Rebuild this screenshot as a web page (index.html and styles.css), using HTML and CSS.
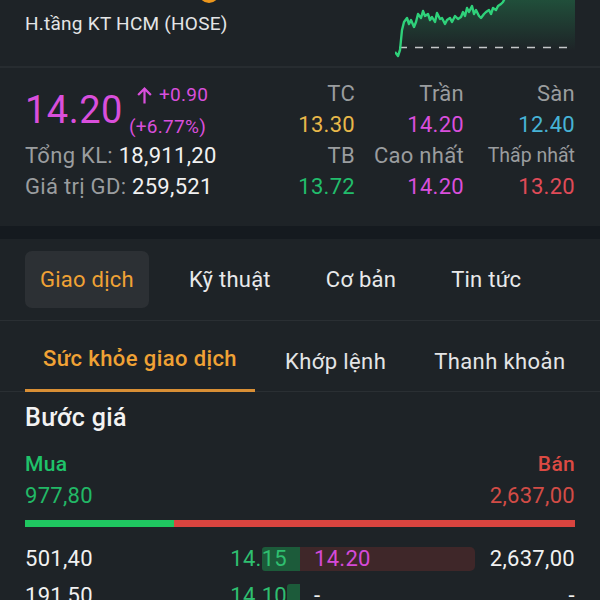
FILE: index.html
```html
<!DOCTYPE html>
<html lang="vi">
<head>
<meta charset="utf-8">
<title>CII</title>
<link rel="stylesheet" href="styles.css">
</head>
<body>
<div class="screen">
  <header class="head">
    <div class="ident">
      <span class="logo-dot"></span>
      <div class="name">H.tầng KT HCM (HOSE)</div>
    </div>
    <svg class="spark" width="180" height="60" viewBox="0 0 180 60">
      <defs>
        <linearGradient id="fill" x1="0" y1="0" x2="0" y2="1">
          <stop offset="0" stop-color="#27c46e" stop-opacity="0.28"/>
          <stop offset="0.85" stop-color="#27c46e" stop-opacity="0"/>
        </linearGradient>
      </defs>
      <polygon fill="url(#fill)" points="0,52 3,56 5,50 7,30 9,22 12,18 14,24 16,20 19,27 21,22 23,14 26,18 28,11 30,16 33,14 35,20 37,17 40,22 42,13 45,19 47,18 50,24 52,20 55,18 57,22 60,16 63,19 66,17 68,12 70,16 72,8 74,12 77,6 79,14 81,10 84,16 86,18 89,14 91,12 94,10 96,14 98,8 101,10 103,6 106,4 108,2 110,-2 180,-2 180,60 0,60"/>
      <line x1="4" y1="47.5" x2="180" y2="47.5" stroke="#c4c6c8" stroke-width="1.6" stroke-dasharray="8 8"/>
      <polyline fill="none" stroke="#2fd17a" stroke-width="2.4" stroke-linejoin="round" points="0,52 3,56 5,50 7,30 9,22 12,18 14,24 16,20 19,27 21,22 23,14 26,18 28,11 30,16 33,14 35,20 37,17 40,22 42,13 45,19 47,18 50,24 52,20 55,18 57,22 60,16 63,19 66,17 68,12 70,16 72,8 74,12 77,6 79,14 81,10 84,16 86,18 89,14 91,12 94,10 96,14 98,8 101,10 103,6 106,4 108,2 110,-2"/>
    </svg>
  </header>

  <section class="stats">
    <div class="price-block">
      <div class="price">14.20</div>
      <div class="change">
        <div class="chg-line">
          <svg class="arrow" width="17" height="17" viewBox="0 0 16 16"><path d="M8 15.5V1.8M2 7.6L8 1.6L14 7.6" fill="none" stroke="#d94fdc" stroke-width="2.1"/></svg>
          <span>+0.90</span>
        </div>
        <div class="chg-line">(+6.77%)</div>
      </div>
    </div>
    <div class="lbl">TC</div>
    <div class="lbl">Trần</div>
    <div class="lbl">Sàn</div>
    <div class="val ref">13.30</div>
    <div class="val ceil">14.20</div>
    <div class="val floor">12.40</div>
    <div class="meta"><span class="lbl-in">Tổng KL:</span> 18,911,20</div>
    <div class="lbl">TB</div>
    <div class="lbl">Cao nhất</div>
    <div class="lbl small">Thấp nhất</div>
    <div class="meta"><span class="lbl-in">Giá trị GD:</span> 259,521</div>
    <div class="val avg">13.72</div>
    <div class="val ceil">14.20</div>
    <div class="val low">13.20</div>
  </section>

  <div class="band"></div>

  <nav class="tabs">
    <div class="tab active">Giao dịch</div>
    <div class="tab">Kỹ thuật</div>
    <div class="tab">Cơ bản</div>
    <div class="tab">Tin tức</div>
  </nav>

  <nav class="subtabs">
    <div class="subtab active">Sức khỏe giao dịch</div>
    <div class="subtab">Khớp lệnh</div>
    <div class="subtab">Thanh khoản</div>
  </nav>

  <section class="book">
    <h2 class="book-title">Bước giá</h2>
    <div class="sides">
      <span class="buy-txt">Mua</span>
      <span class="sell-txt">Bán</span>
    </div>
    <div class="totals">
      <span class="buy-num">977,80</span>
      <span class="sell-num">2,637,00</span>
    </div>
    <div class="ratio"><span class="ratio-buy" style="width:27%"></span></div>

    <div class="levels">
      <div class="level">
        <div class="vol">501,40</div>
        <div class="bid"><span class="bid-bar" style="width:21.7%"></span><span class="px">14.15</span></div>
        <div class="ask"><span class="ask-bar" style="width:100%"></span><span class="px">14.20</span></div>
        <div class="vol right">2,637,00</div>
      </div>
      <div class="level">
        <div class="vol">191,50</div>
        <div class="bid"><span class="bid-bar" style="width:7.4%"></span><span class="px">14.10</span></div>
        <div class="ask"><span class="px plain">-</span></div>
        <div class="vol right">-</div>
      </div>
    </div>
  </section>
</div>
</body>
</html>
```

FILE: styles.css
```css
* { box-sizing: border-box; }
html, body { margin: 0; padding: 0; }
body {
  background: #1e2327;
  font-family: Roboto, "Noto Sans", "Liberation Sans", sans-serif;
  color: #eceded;
}
.screen {
  width: 600px;
  height: 600px;
  overflow: hidden;
  position: relative;
}

/* header */
.head {
  height: 68px;
  padding: 0 25px;
  display: flex;
  justify-content: space-between;
  align-items: flex-start;
  border-bottom: 2px solid #272c30;
}
.ident { position: relative; }
.logo-dot {
  position: absolute;
  left: 173px;
  top: -21px;
  width: 22px;
  height: 24px;
  border-radius: 50%;
  background: #ec961c;
}
.name {
  padding-top: 13px;
  font-size: 19px;
  line-height: 22px;
  letter-spacing: 0.25px;
  color: #e4e5e6;
}
.spark { display: block; }

/* stats */
.stats {
  padding: 10px 25px 24px;
  display: grid;
  grid-template-columns: 1fr 110px 109px 111px;
  grid-auto-rows: 31px;
  font-size: 22px;
  letter-spacing: 0.3px;
  align-items: center;
}
.price-block {
  grid-row: span 2;
  display: flex;
  align-items: center;
  gap: 6px;
  color: #d94fdc;
}
.price {
  font-size: 38px;
  line-height: 44px;
  letter-spacing: 0.5px;
  padding-top: 2px;
}
.change {
  display: flex;
  flex-direction: column;
  gap: 8px;
  font-size: 19px;
  line-height: 24px;
  letter-spacing: 0.3px;
  padding-top: 4px;
}
.chg-line { display: flex; align-items: center; }
.arrow { margin: 0 6px 0 7px; }
.lbl { text-align: right; color: #9a9d9f; white-space: nowrap; }
.lbl.small { font-size: 19.5px; letter-spacing: 0; }
.val { text-align: right; }
.ref { color: #e8b84a; }
.ceil { color: #d94fdc; }
.floor { color: #47b3d6; }
.avg { color: #22bd6c; }
.low { color: #e04b58; }
.meta { color: #f1f1f1; white-space: nowrap; }
.lbl-in { color: #9a9d9f; }

.band { height: 13px; background: #151a1f; }

/* tabs */
.tabs {
  padding: 12px 25px 12px;
  display: flex;
  gap: 25px;
  border-bottom: 1px solid #2a2f33;
}
.tab {
  height: 57px;
  padding: 0 15px;
  display: flex;
  align-items: center;
  font-size: 22px;
  letter-spacing: 0.25px;
  white-space: nowrap;
  color: #e8e9ea;
  border-radius: 7px;
}
.tab.active { background: #2c3034; color: #f0a235; }

.subtabs {
  padding: 0 25px;
  display: flex;
  gap: 12px;
  box-shadow: inset 0 -1px 0 #2a2f33;
}
.subtab {
  flex-shrink: 0;
  white-space: nowrap;
  padding: 28px 18px 15px;
  font-size: 22px;
  line-height: 25px;
  letter-spacing: 0.4px;
  color: #e4e5e6;
  border-bottom: 3px solid transparent;
}
.subtab.active {
  color: #f0a235;
  font-weight: 500;
  border-bottom-color: #d98f35;
  padding-top: 25px;
  padding-bottom: 18px;
}

/* book */
.book { padding: 12px 25px 0; }
.book-title {
  margin: 0;
  font-size: 25px;
  line-height: 28px;
  font-weight: 500;
  letter-spacing: 0.4px;
  color: #f3f3f3;
}
.sides, .totals {
  display: flex;
  justify-content: space-between;
}
.sides {
  margin-top: 19px;
  font-size: 21px;
  line-height: 26px;
  font-weight: 500;
  letter-spacing: 0.3px;
}
.buy-txt { color: #1fc36a; }
.sell-txt { color: #dc4a43; }
.totals {
  margin-top: 6px;
  font-size: 22px;
  line-height: 26px;
  letter-spacing: 0.3px;
}
.buy-num { color: #22b866; }
.sell-num { color: #d24c46; }
.ratio {
  margin-top: 11px;
  height: 7px;
  background: #d9443f;
  display: flex;
}
.ratio-buy { background: #1fc660; height: 100%; }

.levels {
  margin-top: 19px;
  display: flex;
  flex-direction: column;
  gap: 13px;
}
.level {
  display: grid;
  grid-template-columns: 100px 175px 175px 100px;
  height: 24px;
  align-items: center;
  font-size: 22px;
  letter-spacing: 0.3px;
}
.vol { color: #f1f1f1; }
.vol.right { text-align: right; }
.bid, .ask {
  position: relative;
  height: 24px;
  display: flex;
  align-items: center;
}
.bid { justify-content: flex-end; padding-right: 13px; }
.ask { padding-left: 14px; }
.bid-bar {
  position: absolute;
  right: 0; top: 0; bottom: 0;
  background: #1c5b3a;
  border-radius: 3px 0 0 3px;
}
.ask-bar {
  position: absolute;
  left: 0; top: 0; bottom: 0;
  background: #3f2729;
  border-radius: 0 5px 5px 0;
}
.px { position: relative; }
.bid .px { color: #2fbf70; }
.ask .px { color: #d54ad8; }
.ask .px.plain { color: #f1f1f1; }
```
